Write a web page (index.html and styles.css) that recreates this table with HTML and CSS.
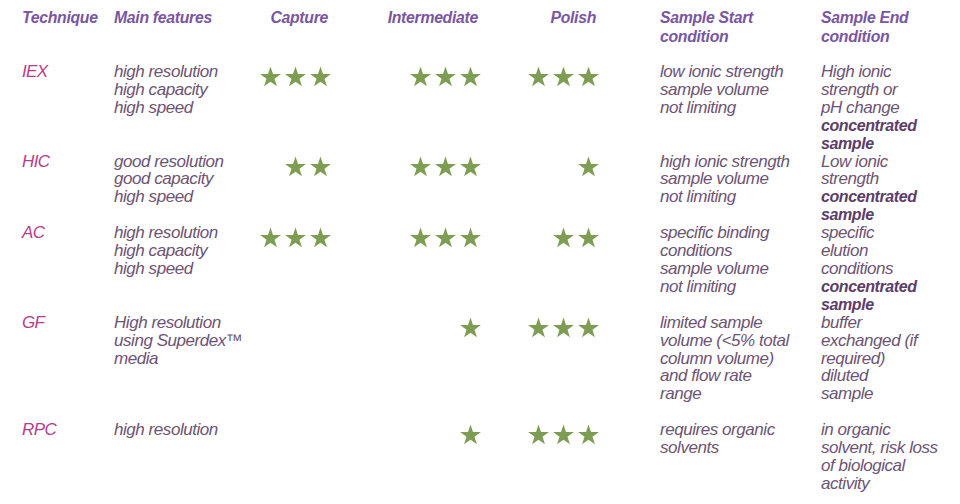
FILE: index.html
```html
<!DOCTYPE html>
<html lang="en">
<head>
<meta charset="utf-8">
<title>Chromatography techniques</title>
<link rel="stylesheet" href="styles.css">
</head>
<body>
<svg class="defs" width="0" height="0" aria-hidden="true">
  <defs>
    <symbol id="star" viewBox="0 0 24 22">
      <polygon points="12,0.5 14.59,8.44 22.94,8.45 16.18,13.36 18.76,21.3 12,16.4 5.24,21.3 7.82,13.36 1.06,8.45 9.41,8.44"/>
    </symbol>
  </defs>
</svg>
<table class="tech">
  <colgroup>
    <col class="c-tech"><col class="c-main"><col class="c-cap"><col class="c-int"><col class="c-pol"><col class="c-start"><col class="c-end">
  </colgroup>
  <thead>
    <tr>
      <th class="left">Technique</th>
      <th class="left">Main features</th>
      <th class="right">Capture</th>
      <th class="right">Intermediate</th>
      <th class="right">Polish</th>
      <th class="left start">Sample Start<br>condition</th>
      <th class="left">Sample End<br>condition</th>
    </tr>
  </thead>
  <tbody>
    <tr>
      <td class="name">IEX</td>
      <td>high resolution<br>high capacity<br>high speed</td>
      <td class="stars"><span class="row"><svg class="s"><use href="#star"/></svg><svg class="s"><use href="#star"/></svg><svg class="s"><use href="#star"/></svg></span></td>
      <td class="stars"><span class="row"><svg class="s"><use href="#star"/></svg><svg class="s"><use href="#star"/></svg><svg class="s"><use href="#star"/></svg></span></td>
      <td class="stars"><span class="row"><svg class="s"><use href="#star"/></svg><svg class="s"><use href="#star"/></svg><svg class="s"><use href="#star"/></svg></span></td>
      <td class="start">low ionic strength<br>sample volume<br>not limiting</td>
      <td>High ionic<br>strength or<br>pH change<br><b>concentrated<br>sample</b></td>
    </tr>
    <tr>
      <td class="name">HIC</td>
      <td>good resolution<br>good capacity<br>high speed</td>
      <td class="stars"><span class="row"><svg class="s"><use href="#star"/></svg><svg class="s"><use href="#star"/></svg></span></td>
      <td class="stars"><span class="row"><svg class="s"><use href="#star"/></svg><svg class="s"><use href="#star"/></svg><svg class="s"><use href="#star"/></svg></span></td>
      <td class="stars"><span class="row"><svg class="s"><use href="#star"/></svg></span></td>
      <td class="start">high ionic strength<br>sample volume<br>not limiting</td>
      <td>Low ionic<br>strength<br><b>concentrated<br>sample</b></td>
    </tr>
    <tr>
      <td class="name">AC</td>
      <td>high resolution<br>high capacity<br>high speed</td>
      <td class="stars"><span class="row"><svg class="s"><use href="#star"/></svg><svg class="s"><use href="#star"/></svg><svg class="s"><use href="#star"/></svg></span></td>
      <td class="stars"><span class="row"><svg class="s"><use href="#star"/></svg><svg class="s"><use href="#star"/></svg><svg class="s"><use href="#star"/></svg></span></td>
      <td class="stars"><span class="row"><svg class="s"><use href="#star"/></svg><svg class="s"><use href="#star"/></svg></span></td>
      <td class="start">specific binding<br>conditions<br>sample volume<br>not limiting</td>
      <td>specific<br>elution<br>conditions<br><b>concentrated<br>sample</b></td>
    </tr>
    <tr class="gap">
      <td class="name">GF</td>
      <td>High resolution<br>using Superdex™<br>media</td>
      <td class="stars"></td>
      <td class="stars"><span class="row"><svg class="s"><use href="#star"/></svg></span></td>
      <td class="stars"><span class="row"><svg class="s"><use href="#star"/></svg><svg class="s"><use href="#star"/></svg><svg class="s"><use href="#star"/></svg></span></td>
      <td class="start">limited sample<br>volume (&lt;5% total<br>column volume)<br>and flow rate<br>range</td>
      <td>buffer<br>exchanged (if<br>required)<br>diluted<br>sample</td>
    </tr>
    <tr>
      <td class="name">RPC</td>
      <td>high resolution</td>
      <td class="stars"></td>
      <td class="stars"><span class="row"><svg class="s"><use href="#star"/></svg></span></td>
      <td class="stars"><span class="row"><svg class="s"><use href="#star"/></svg><svg class="s"><use href="#star"/></svg><svg class="s"><use href="#star"/></svg></span></td>
      <td class="start">requires organic<br>solvents</td>
      <td>in organic<br>solvent, risk loss<br>of biological<br>activity</td>
    </tr>
  </tbody>
</table>
</body>
</html>
```

FILE: styles.css
```css
html, body {
  margin: 0;
  padding: 0;
  background: #ffffff;
}

body {
  font-family: "Liberation Sans", Arial, sans-serif;
  font-style: italic;
  font-size: 17px;
  letter-spacing: -0.45px;
  line-height: 17.9px;
  color: #6d5374;
}

.defs {
  position: absolute;
  width: 0;
  height: 0;
  overflow: hidden;
}

.tech {
  table-layout: fixed;
  border-collapse: collapse;
  width: 938px;
  margin: 9px 0 0 22px;
}

.c-tech { width: 92px; }
.c-main { width: 126px; }
.c-cap { width: 92px; }
.c-int { width: 150px; }
.c-pol { width: 118px; }
.c-start { width: 221px; }
.c-end { width: 139px; }

.tech th,
.tech td {
  padding: 0;
  vertical-align: top;
  white-space: nowrap;
}

.tech th {
  font-weight: bold;
  font-size: 15.8px;
  letter-spacing: -0.3px;
  line-height: 18.5px;
  color: #7a56a2;
  padding-bottom: 17px;
}

.tech th.left { text-align: left; }
.tech th.right { text-align: right; padding-right: 4px; }

.tech .start { padding-left: 60px; }

.tech td.name {
  color: #b53d89;
  letter-spacing: -0.6px;
}

.tech b {
  font-weight: bold;
  font-size: 16px;
  letter-spacing: -0.4px;
  color: #5d3d68;
}

.tech .gap td { padding-bottom: 18px; }

.tech td.stars { text-align: right; }

.row {
  display: inline-flex;
  gap: 2px;
  margin-top: 3px;
}

.s {
  width: 23px;
  height: 21px;
  fill: #7c9d52;
  display: block;
}
```
